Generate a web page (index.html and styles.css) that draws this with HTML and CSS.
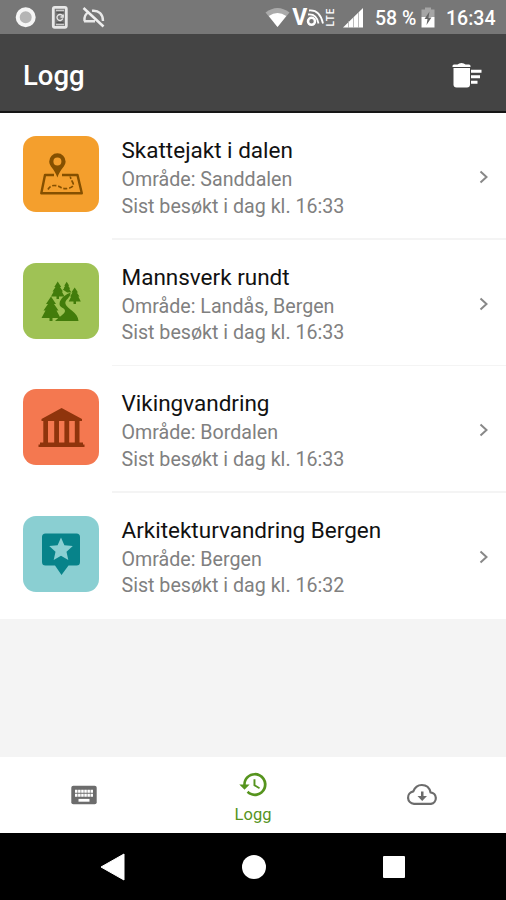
FILE: index.html
```html
<!DOCTYPE html>
<html lang="no">

<head>
    <meta charset="UTF-8">
    <meta name="viewport" content="width=device-width, initial-scale=1.0">
    <title>Logg</title>
    <link rel="stylesheet" href="styles.css">
</head>

<body>
    <div class="status-bar">
        <svg class="status-left" width="110" height="34" viewBox="0 0 110 34">
            <circle cx="25.7" cy="17.3" r="8" fill="#b5b5b5" stroke="#f5f5f5" stroke-width="4"/>
            <rect x="53.3" y="7.3" width="13" height="20" rx="1.5" fill="none" stroke="#e8e8e8" stroke-width="2.8"/>
            <path d="M56 10.500h8M56 24.500h8" stroke="#ccc" stroke-width="1.500"/>
            <path d="M56.500 12.500h7M56.500 22.500h7" stroke="#555" stroke-width="1.500"/>
            <path d="M62.500 15.800a3 3 0 1 0 .3 2.800M60.500 17h2.700v-2.500" fill="none" stroke="#e8e8e8" stroke-width="1.300"/>
            <path d="M84.500 21C84 16.500 86 13.500 89 12M92 10.800C99 10 103 14.500 103 21M84 21.200h11" fill="none" stroke="#e8e8e8" stroke-width="2.400"/>
            <path d="M83.500 8l20 18.500" stroke="#eee" stroke-width="2.500"/>
        </svg>
        <div class="status-right">
            <svg width="98" height="34" viewBox="265 0 98 34">
                <path d="M265.500 12.500Q277.500 3.500 289.500 12.500L277.500 27Z" fill="#aaa"/>
                <path d="M268.800 16Q277.500 10 286.300 16L277.500 27Z" fill="#fff"/>
                <text class="volte-v" x="292.300" y="25">V</text>
                <circle cx="311.500" cy="21.300" r="3.500" fill="none" stroke="#fff" stroke-width="2.500"/>
                <path d="M308 14.500Q316.500 13.500 318.500 23.500M309 10.500Q320 9.500 323 23.500" fill="none" stroke="#fff" stroke-width="1.800"/>
                <text class="volte-lte" transform="translate(334 26.500) rotate(-90)" textLength="18">LTE</text>
                <path d="M343 27.500L363 8v19.500Z" fill="#fff"/>
                <path d="M348.500 21v7M353.500 17v11M358.500 12v16" stroke="#aaa" stroke-width=".8"/>
            </svg>
            <span class="percent">58 %</span>
            <svg class="battery" width="14" height="34" viewBox="0 0 14 34">
                <path d="M4 7.500h6v2h3.500v7.500H.500V9.500H4z" fill="#a5a5a5"/>
                <path d="M.500 17h13v10.500H.500z" fill="#fff"/>
                <path d="M8.500 11.500L3.500 19h3l-1 6 5-7.500h-3z" fill="#666"/>
            </svg>
            <span class="clock">16:34</span>
        </div>
    </div>

    <div class="app-bar">
        <h1>Logg</h1>
        <svg width="32" height="28" viewBox="0 0 32 28">
            <path d="M2.500 6h16.500v16.500q0 3-3 3H5.500q-3 0-3-3z" fill="#fff"/>
            <path d="M1.500 5V4q0-1.500 1.500-1.500h3.500Q8 1 10.500 1T14.500 2.500H18q1.500 0 1.500 1.500v1z" fill="#fff"/>
            <path d="M20 9.300h10.500M20 14.800h9M20 20.300h6.500" stroke="#fff" stroke-width="3"/>
        </svg>
    </div>

    <div class="log-list">
        <div class="log-item">
            <svg class="tile orange" viewBox="0 0 76 76">
                <path fill-rule="evenodd" d="M34.400 17.300a8.200 8.200 0 0 1 8.200 8.200c0 5-5.200 7-8.200 16-3-9-8.200-11-8.200-16a8.200 8.200 0 0 1 8.200-8.200zm0 4.200a4 4 0 1 0 0 8 4 4 0 0 0 0-8z" fill="#855000"/>
                <path d="M31 39H22L18.300 57.300H58.800L54.500 39H39" fill="none" stroke="#855000" stroke-width="2.400" stroke-linejoin="round"/>
                <path d="M25 53.500q2-4 6-4t7 2 8.500 0.500 3-6-2-5.500" fill="none" stroke="#855000" stroke-width="1.700" stroke-dasharray="4 1.800"/>
            </svg>
            <div class="info">
                <h2>Skattejakt i dalen</h2>
                <p class="area">Område: Sanddalen</p>
                <p class="visited">Sist besøkt i dag kl. 16:33</p>
            </div>
            <svg class="chevron" viewBox="0 0 10 14"><path d="M1.500 1.500L7.500 7l-6 5.500"/></svg>
        </div>

        <div class="log-item">
            <svg class="tile green" viewBox="0 0 76 76">
                <g fill="#427c0b">
                    <path d="M28 33.500l5 7.500h-2l4.500 6.500h-2l4 7.500h-8v3h-3v-3h-8l4-7.500h-2L25 41h-2z"/>
                    <path d="M34.700 18.500l3.500 5.500h-1.200l3 4.500h-1.200l2.700 5h-5.500V36h-2.500v-2.500H28l2.700-5h-1.200l3-4.500h-1.200z"/>
                    <path d="M43.700 18.700l2.500 4h-1l2 3h-1l2 3.500-4 .300-4.500-3 1.500-.800-.500-.500 1.500-2.500h-1z"/>
                    <path d="M51.700 24.500l3.300 5h-1.200l2.700 4h-1.200l2.500 5H53V41h-2.500v-2.500h-4.800l2.500-5H47l2.500-4h-1.200z"/>
                    <path d="M47.500 29.500C44 31 36.500 35 36.500 41c0 4 5.500 3.500 5.500 7 0 3-6 5.500-10 10h23.500c-.500-9-11.500-12-13-17-1.200-4.500 5.500-6 5-11.500z"/>
                </g>
            </svg>
            <div class="info">
                <h2>Mannsverk rundt</h2>
                <p class="area">Område: Landås, Bergen</p>
                <p class="visited">Sist besøkt i dag kl. 16:33</p>
            </div>
            <svg class="chevron" viewBox="0 0 10 14"><path d="M1.500 1.500L7.500 7l-6 5.500"/></svg>
        </div>

        <div class="log-item">
            <svg class="tile red" viewBox="0 0 76 76">
                <path d="M38.600 19L59 30v2H18.500v-2zM20.300 32h4.700v22h-4.700zM31.200 32H36v22h-4.800zM41.400 32h4.800v22h-4.800zM51.800 32h4.700v22h-4.700zM17 53.500h43v2h1.500v2.500h-46v-2.500H17z" fill="#8f340c"/>
            </svg>
            <div class="info">
                <h2>Vikingvandring</h2>
                <p class="area">Område: Bordalen</p>
                <p class="visited">Sist besøkt i dag kl. 16:33</p>
            </div>
            <svg class="chevron" viewBox="0 0 10 14"><path d="M1.500 1.500L7.500 7l-6 5.500"/></svg>
        </div>

        <div class="log-item">
            <svg class="tile teal" viewBox="0 0 76 76">
                <path d="M22.500 17.500H53.500q3.500 0 3.500 3.500V46q0 3.500-3.500 3.500H45.500L38.500 59l-6.500-9.500H22.500Q19 49.500 19 46V21q0-3.500 3.500-3.500z" fill="#07838a"/>
                <path d="M38 21.500l3.400 7.700 8.400.9-6.300 5.600 1.800 8.200-7.300-4.200-7.300 4.200 1.800-8.200-6.300-5.600 8.400-.9z" fill="#8acfd2"/>
            </svg>
            <div class="info">
                <h2>Arkitekturvandring Bergen</h2>
                <p class="area">Område: Bergen</p>
                <p class="visited">Sist besøkt i dag kl. 16:32</p>
            </div>
            <svg class="chevron" viewBox="0 0 10 14"><path d="M1.500 1.500L7.500 7l-6 5.500"/></svg>
        </div>
    </div>

    <div class="tab-bar">
        <div class="tab">
            <svg width="26" height="20" viewBox="0 0 26 20">
                <rect x=".3" y=".8" width="25.400" height="18.400" rx="2" fill="#6c6c6c"/>
                <path d="M4 6.300h18M4 10.200h18" stroke="#fff" stroke-width="3" stroke-dasharray="2.500 .6"/>
                <path d="M7.500 15.300h11" stroke="#fff" stroke-width="2.800"/>
            </svg>
        </div>
        <div class="tab active">
            <svg width="31" height="31" viewBox="0 0 24 24">
                <path d="M13 3a9 9 0 0 0-9 9H1l3.900 3.900.1.100L9 12H6c0-3.900 3.100-7 7-7s7 3.100 7 7-3.100 7-7 7c-1.900 0-3.700-.8-4.900-2.100l-1.400 1.400A9 9 0 1 0 13 3zm-1 5v5l4.300 2.500.7-1.200-3.500-2.100V8z" fill="#56941e"/>
            </svg>
            <span>Logg</span>
        </div>
        <div class="tab">
            <svg width="32" height="24" viewBox="0 0 32 24">
                <path d="M8 20.800a6.300 6.300 0 0 1-.700-12.500C9 4 12 2 15.800 2c4.500 0 7.700 2.800 8.700 7.300a5.800 5.800 0 0 1 .5 11.500z" fill="none" stroke="#6c6c6c" stroke-width="2.200"/>
                <path d="M15 8.500h2.500v4.500H21l-4.800 5-4.700-5H15z" fill="#6c6c6c"/>
            </svg>
        </div>
    </div>

    <div class="nav-bar">
        <svg width="28" height="30" viewBox="0 0 28 30"><path d="M2 15L25 2v26z" fill="#fff" stroke="#fff" stroke-linejoin="round"/></svg>
        <div class="home"></div>
        <div class="recent"></div>
    </div>
</body>
</html>
```
FILE: styles.css
```css
* {
    box-sizing: border-box;
}

body {
    margin: 0;
    height: 900px;
    display: flex;
    flex-direction: column;
    overflow: hidden;
    background-color: #f4f4f4;
    font-family: Roboto, sans-serif;
}

svg {
    display: block;
    flex-shrink: 0;
}

h1, h2, p {
    margin: 0;
}

/* Status bar */
.status-bar {
    height: 34px;
    flex-shrink: 0;
    display: flex;
    justify-content: space-between;
    padding-right: 10px;
    background-color: #777777;
    color: #ffffff;
}

.status-right {
    display: flex;
    font-size: 19.5px;
    line-height: 37px;
    font-weight: 500;
    white-space: nowrap;
}

.volte-v {
    font-size: 23px;
    font-weight: 700;
    fill: #ffffff;
}

.volte-lte {
    font-size: 10px;
    font-weight: 500;
    fill: #ffffff;
}

.percent {
    width: 46px;
    margin-left: 12px;
}

.clock {
    width: 50px;
    margin-left: 11px;
}

/* App bar */
.app-bar {
    height: 79px;
    flex-shrink: 0;
    display: flex;
    justify-content: space-between;
    align-items: center;
    padding: 7px 23px 0 23px;
    background-color: #444444;
    border-bottom: 2px solid #151515;
    color: #ffffff;
}

.app-bar h1 {
    font-size: 27.5px;
    line-height: 34px;
    font-weight: 500;
}

/* Log entries */
.log-list {
    flex-shrink: 0;
    background-color: #ffffff;
}

.log-item {
    height: 126.5px;
    display: flex;
    position: relative;
    padding: 23px 17px 0 23px;
}

.log-item:last-child {
    height: 126px;
}

.log-item:not(:last-child)::after {
    content: "";
    position: absolute;
    left: 112px;
    right: 0;
    bottom: 0;
    height: 1.5px;
    background-color: #f4f4f4;
}

.tile {
    width: 76px;
    height: 76px;
    border-radius: 13px;
}

.orange {
    background-color: #f49f2d;
}

.green {
    background-color: #9fc255;
}

.red {
    background-color: #f47850;
}

.teal {
    background-color: #8acfd2;
}

.info {
    flex: 1;
    padding-left: 22.5px;
    white-space: nowrap;
}

.info h2 {
    padding-bottom: 2px;
    font-size: 22.5px;
    line-height: 29px;
    font-weight: 400;
    color: #111111;
}

.info p {
    font-size: 19.65px;
    line-height: 26.7px;
    color: #808080;
}

.chevron {
    width: 10px;
    height: 14px;
    margin-top: 34px;
}

.chevron path {
    fill: none;
    stroke: #888888;
    stroke-width: 2;
}

/* Tabs */
.tab-bar {
    height: 76px;
    flex-shrink: 0;
    margin-top: auto;
    display: flex;
    background-color: #ffffff;
}

.tab {
    flex: 1;
    display: flex;
    flex-direction: column;
    align-items: center;
    justify-content: center;
}

.tab.active {
    justify-content: flex-start;
    padding-top: 12px;
    color: #56941e;
}

.tab.active span {
    font-size: 16.5px;
    line-height: 20px;
    margin-top: 5px;
}

/* Android navigation */
.nav-bar {
    height: 67px;
    flex-shrink: 0;
    display: flex;
    justify-content: space-between;
    align-items: center;
    padding: 0 101px 0 99px;
    background-color: #000000;
}

.home {
    width: 24px;
    height: 24px;
    margin-right: 3px;
    border-radius: 50%;
    background-color: #ffffff;
}

.recent {
    width: 22px;
    height: 22px;
    border-radius: 1px;
    background-color: #ffffff;
}
```
